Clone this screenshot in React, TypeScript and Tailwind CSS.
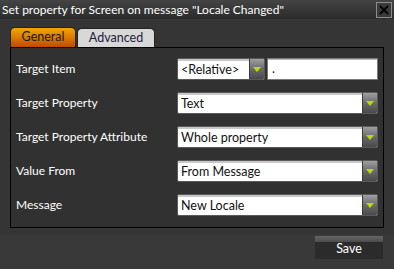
import React from "react";

function Arrow() {
  return (
    <div className="flex h-full w-[15px] shrink-0 items-center justify-center border-l border-[#3a3a3a] bg-gradient-to-b from-[#a0a0a0] via-[#6a6a6a] to-[#4a4a4a]">
      <svg width="8" height="5" viewBox="0 0 8 5">
        <polygon points="0,0 8,0 4,5" fill="#b4e000" />
      </svg>
    </div>
  );
}

function Select({ value, width }: { value: string; width: string }) {
  return (
    <div
      className={`flex h-[22px] ${width} overflow-hidden rounded-[2px] border border-[#5a5a5a] bg-white shadow-[inset_0_1px_0_#9a9a9a]`}
    >
      <div className="flex flex-1 items-center border-t-2 border-[#c8c8c8] pl-[3px] text-[12.5px] text-[#111]">
        {value}
      </div>
      <Arrow />
    </div>
  );
}

const rows = [
  { label: "Target Property", value: "Text" },
  { label: "Target Property Attribute", value: "Whole property" },
  { label: "Value From", value: "From Message" },
  { label: "Message", value: "New Locale" },
];

export default function App() {
  return (
    <div className="flex h-[269px] w-[394px] flex-col bg-[#383838] font-['Lato',sans-serif] text-white">
      {/* Title bar */}
      <div className="flex h-[19px] items-center justify-between bg-gradient-to-b from-[#444444] to-[#2b2b2b] pl-[2px] pr-[2px]">
        <span className="text-[12px] leading-none">
          Set property for Screen on message "Locale Changed"
        </span>
        <div className="flex h-[16px] w-[16px] items-center justify-center border border-[#8c8c8c] bg-[#3a3a3a]">
          <svg width="10" height="10" viewBox="0 0 10 10">
            <path d="M1 1 L9 9 M9 1 L1 9" stroke="#000" strokeWidth="1.8" />
          </svg>
        </div>
      </div>

      <div className="flex flex-col bg-[#353535] px-[10px] pt-[8px] pb-[7px]">
        {/* Tabs */}
        <div className="flex h-[20px] items-end gap-[1px]">
          <div className="flex h-[20px] w-[66px] items-center justify-center rounded-t-[5px] border border-b-0 border-[#222] bg-gradient-to-b from-[#f2a800] to-[#c04a00] text-[12.5px] text-[#1a1a1a]">
            General
          </div>
          <div className="flex h-[19px] w-[78px] items-center justify-center rounded-t-[5px] border border-b-0 border-[#222] bg-[#d8d8d8] text-[12.5px] text-[#1c1c3c]">
            Advanced
          </div>
        </div>

        {/* Panel */}
        <div className="flex h-[181px] w-[374px] flex-col gap-[12px] border border-black bg-[#313131] pl-[5px] pt-[10px]">
          <div className="flex h-[22px] items-center">
            <span className="w-[161px] text-[12px]">Target Item</span>
            <Select value="<Relative>" width="w-[88px]" />
            <div className="ml-[2px] flex h-[22px] w-[111px] items-center border border-[#7a7a7a] bg-white pl-[4px] text-[12.5px] text-[#111] shadow-[inset_0_1px_0_#bbbbbb]">
              .
            </div>
          </div>
          {rows.map((r) => (
            <div key={r.label} className="flex h-[22px] items-center">
              <span className="w-[161px] text-[12px]">{r.label}</span>
              <Select value={r.value} width="w-[201px]" />
            </div>
          ))}
        </div>
      </div>

      {/* Footer */}
      <div className="flex flex-1 justify-end bg-[#393939] pr-[11px] pt-[1px]">
        <button className="flex h-[23px] w-[68px] flex-col overflow-hidden">
          <div className="h-[6px] w-full bg-gradient-to-b from-[#666666] to-[#4c4c4c]" />
          <div className="flex flex-1 w-full items-center justify-center bg-[#2b2b2b] pb-[3px] text-[12.5px] leading-none text-white">
            Save
          </div>
        </button>
      </div>
    </div>
  );
}
